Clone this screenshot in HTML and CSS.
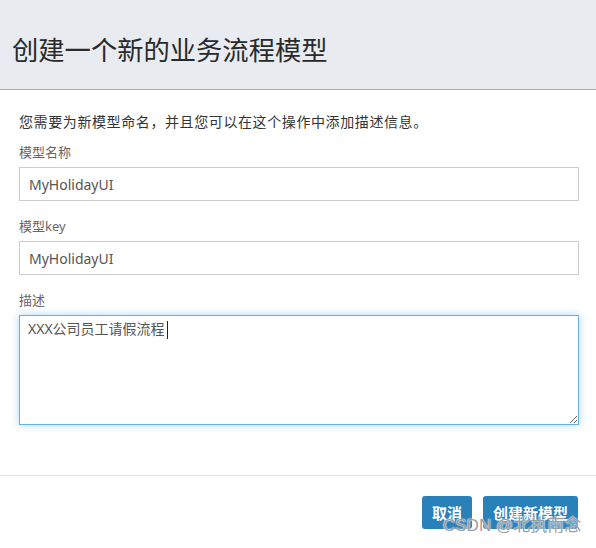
FILE: index.html
```html
<!DOCTYPE html>
<html lang="zh-CN">
<head>
<meta charset="utf-8">
<title>创建一个新的业务流程模型</title>
<link rel="stylesheet" href="styles.css">
</head>
<body>
<div class="modal">
  <div class="modal-header">
    <h1 class="modal-title">创建一个新的业务流程模型</h1>
  </div>
  <div class="modal-body">
    <p class="intro">您需要为新模型命名，并且您可以在这个操作中添加描述信息。</p>
    <div class="field">
      <label class="label">模型名称</label>
      <input class="control" type="text" value="MyHolidayUI">
    </div>
    <div class="field">
      <label class="label">模型key</label>
      <input class="control" type="text" value="MyHolidayUI">
    </div>
    <div class="field">
      <label class="label">描述</label>
      <div class="area-wrap">
        <textarea class="control area focused">XXX公司员工请假流程</textarea>
        <span class="caret"></span>
      </div>
    </div>
  </div>
  <div class="modal-footer">
    <button class="btn">取消</button>
    <button class="btn">创建新模型</button>
  </div>
  <div class="watermark">CSDN @北执南念</div>
</div>
</body>
</html>
```
FILE: styles.css
```css
* { box-sizing: border-box; }
html, body {
  margin: 0;
  padding: 0;
  background: #ffffff;
  font-family: "Noto Sans", "Noto Sans CJK SC", sans-serif;
  color: #333;
}
.modal {
  position: relative;
  width: 596px;
  height: 548px;
  overflow: hidden;
}
.modal-header {
  height: 90px;
  background: #e8ecf0;
  border-bottom: 1px solid #a6b0bc;
  display: flex;
  align-items: center;
  padding-left: 12px;
}
.modal-title {
  margin: 0;
  padding-top: 8px;
  font-weight: 400;
  font-size: 26.3px;
  line-height: 30px;
  color: #2a2a2a;
  font-family: "Noto Sans CJK SC", sans-serif;
}
.modal-body {
  padding: 22px 17px 0 19px;
  display: flex;
  flex-direction: column;
}
.intro {
  margin: 0 0 10px;
  font-size: 14px;
  line-height: 20px;
  letter-spacing: 0.6px;
  color: #333;
}
.field {
  display: flex;
  flex-direction: column;
  gap: 5px;
  margin-bottom: 15px;
}
.label {
  font-size: 13px;
  line-height: 20px;
  color: #666;
}
.control {
  width: 560px;
  height: 34px;
  border: 1px solid #cccccc;
  border-radius: 0;
  padding: 0 9px;
  font-family: "Noto Sans", "Noto Sans CJK SC", sans-serif;
  font-size: 14px;
  color: #555;
  background: #fff;
  outline: none;
}
.area-wrap {
  position: relative;
}
.area {
  display: block;
  height: 110px;
  padding: 3px 8px;
  line-height: 20px;
  resize: vertical;
}
.focused {
  border-color: #66afe9;
  box-shadow: 0 0 8px rgba(102, 175, 233, 0.5);
}
.caret {
  position: absolute;
  left: 148px;
  top: 6px;
  width: 1px;
  height: 18px;
  background: #222;
}
.modal-footer {
  margin-top: 35px;
  border-top: 1px solid #e2e2e2;
  padding: 20px 18px 0 0;
  display: flex;
  justify-content: flex-end;
  gap: 11px;
}
.btn {
  height: 33px;
  padding: 0 10px;
  border: none;
  border-radius: 3px;
  background: #2a80b9;
  color: #fff;
  font-family: "Noto Sans CJK SC", sans-serif;
  font-weight: 700;
  font-size: 15px;
  line-height: 33px;
}
.watermark {
  position: absolute;
  left: 443px;
  top: 514px;
  font-family: "Liberation Sans", "Noto Sans CJK SC", sans-serif;
  font-size: 17px;
  line-height: 24px;
  color: rgba(130, 130, 130, 0.8);
  text-shadow: 0 0 2px #fff, 0 0 1px #fff;
  white-space: nowrap;
}
```
